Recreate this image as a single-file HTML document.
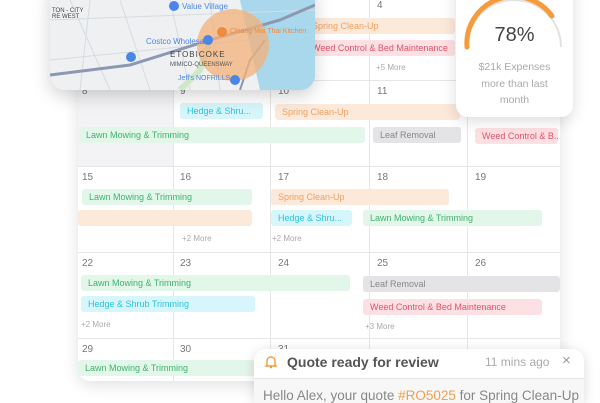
<!DOCTYPE html>
<html><head><meta charset="utf-8"><style>
*{margin:0;padding:0;box-sizing:border-box}
html,body{width:600px;height:403px;overflow:hidden}
body{background:#fff;font-family:"Liberation Sans",sans-serif;position:relative}
.a{position:absolute}
.cal{left:78px;top:-10px;width:482px;height:391px;background:#fff;border-radius:12px;box-shadow:0 4px 16px rgba(0,0,0,.12);overflow:hidden}
.vl{position:absolute;top:0;width:1px;background:#e6e6e8}
.hl{position:absolute;left:0;width:100%;height:1px;background:#e6e6e8}
.d{position:absolute;font-size:10px;color:#777}
.ev{position:absolute;height:16px;border-radius:3px;font-size:9px;line-height:16px;padding-left:7px;white-space:nowrap;overflow:hidden}
.g{background:#e3f6ea;color:#3fb36e}.p{background:#fde9da;color:#f0a060}.c{background:#d6f6fb;color:#2ec3dd}.r{background:#fde0e3;color:#e0546a}.gr{background:#e4e4e6;color:#888}
.m{position:absolute;font-size:8px;color:#aaa}
</style></head><body>
<div class="a cal">
 <div class="a" style="left:0;top:90px;width:95px;height:86px;background:#f3f3f5"></div>
 <div class="vl" style="left:95px;height:400px;top:90px"></div>
 <div class="vl" style="left:192px;height:400px;top:90px"></div>
 <div class="vl" style="left:291px;height:400px"></div>
 <div class="vl" style="left:389px;height:400px"></div>
 <div class="hl" style="top:90px"></div>
 <div class="hl" style="top:176px"></div>
 <div class="hl" style="top:262px"></div>
 <div class="hl" style="top:348px"></div>
</div>
<div class="d" style="left:377px;top:0px">4</div>
<div class="ev p" style="left:250px;top:18px;width:205px;padding-left:62px">Spring Clean-Up</div>
<div class="ev r" style="left:250px;top:40px;width:205px;padding-left:62px">Weed Control &amp; Bed Maintenance</div>
<div class="m" style="left:376px;top:63px">+5 More</div>
<div class="d" style="left:82px;top:86px">8</div><div class="d" style="left:180px;top:86px">9</div><div class="d" style="left:278px;top:86px">10</div><div class="d" style="left:377px;top:86px">11</div>
<div class="ev c" style="left:180px;top:103px;width:83px">Hedge &amp; Shru...</div>
<div class="ev p" style="left:275px;top:104px;width:185px">Spring Clean-Up</div>
<div class="ev g" style="left:79px;top:127px;width:286px">Lawn Mowing &amp; Trimming</div>
<div class="ev gr" style="left:373px;top:127px;width:88px">Leaf Removal</div>
<div class="ev r" style="left:475px;top:128px;width:83px">Weed Control &amp; B...</div>
<div class="d" style="left:82px;top:172px">15</div><div class="d" style="left:180px;top:172px">16</div><div class="d" style="left:278px;top:172px">17</div><div class="d" style="left:377px;top:172px">18</div><div class="d" style="left:475px;top:172px">19</div>
<div class="ev g" style="left:82px;top:189px;width:170px">Lawn Mowing &amp; Trimming</div>
<div class="ev p" style="left:78px;top:210px;width:174px"></div>
<div class="ev p" style="left:271px;top:189px;width:178px">Spring Clean-Up</div>
<div class="ev c" style="left:271px;top:210px;width:81px">Hedge &amp; Shru...</div>
<div class="ev g" style="left:363px;top:210px;width:179px">Lawn Mowing &amp; Trimming</div>
<div class="m" style="left:182px;top:234px">+2 More</div><div class="m" style="left:272px;top:234px">+2 More</div>
<div class="d" style="left:82px;top:258px">22</div><div class="d" style="left:180px;top:258px">23</div><div class="d" style="left:278px;top:258px">24</div><div class="d" style="left:377px;top:258px">25</div><div class="d" style="left:475px;top:258px">26</div>
<div class="ev g" style="left:81px;top:275px;width:269px">Lawn Mowing &amp; Trimming</div>
<div class="ev c" style="left:81px;top:296px;width:174px">Hedge &amp; Shrub Trimming</div>
<div class="m" style="left:81px;top:320px">+2 More</div>
<div class="ev gr" style="left:363px;top:276px;width:197px">Leaf Removal</div>
<div class="ev r" style="left:363px;top:299px;width:179px">Weed Control &amp; Bed Maintenance</div>
<div class="m" style="left:365px;top:322px">+3 More</div>
<div class="d" style="left:82px;top:344px">29</div><div class="d" style="left:180px;top:344px">30</div><div class="d" style="left:278px;top:344px">31</div>
<div class="ev g" style="left:78px;top:360px;width:177px">Lawn Mowing &amp; Trimming</div>

<div class="a" style="left:50px;top:-20px;width:265px;height:110px;border-radius:15px;overflow:hidden;box-shadow:0 6px 18px rgba(0,0,0,.18);background:#eef0f2">
<svg width="265" height="110" style="position:absolute;left:0;top:0">
 <path d="M210 110 L230 60 L240 20 L265 0 L265 110Z" fill="#a9d8ec"/>
 <path d="M190 20 L265 20 L265 110 L210 110Z" fill="#a9d8ec"/>
 <g stroke="#d7dbe0" stroke-width="1" fill="none"><path d="M0 40 L265 30"/><path d="M20 20 L60 110"/><path d="M70 20 L100 110"/><path d="M120 20 L140 110"/><path d="M0 80 L200 60"/><path d="M40 20 L30 110"/><path d="M160 20 L170 110"/></g>
 <path d="M0 95 L80 85 L160 60 L230 40 L265 25" stroke="#8c97b3" stroke-width="3" fill="none"/>
 <path d="M190 110 L200 80 L215 60" stroke="#8c97b3" stroke-width="2" fill="none"/>
 <path d="M130 110 L150 90 L160 60" stroke="#cfe8c8" stroke-width="6" fill="none"/>
 <circle cx="183" cy="65" r="36" fill="#f3b27a" fill-opacity=".75"/>
 <circle cx="124" cy="26" r="5" fill="#4a86e8"/><circle cx="158" cy="60" r="5" fill="#4a86e8"/><circle cx="81" cy="77" r="5" fill="#4a86e8"/><circle cx="185" cy="100" r="5" fill="#4a86e8"/><circle cx="172" cy="52" r="5" fill="#f08a3c"/>
</svg>
<div class="a" style="left:132px;top:22px;font-size:8px;color:#4a86e8">Value Village</div>
<div class="a" style="left:96px;top:57px;font-size:8px;color:#4a86e8">Costco Wholesale</div>
<div class="a" style="left:120px;top:70px;font-size:8px;color:#444;letter-spacing:1px">ETOBICOKE</div>
<div class="a" style="left:120px;top:82px;font-size:6px;color:#555">MIMICO-QUEENSWAY</div>
<div class="a" style="left:128px;top:95px;font-size:7px;color:#4a86e8">Jeff's NOFRILLS</div>
<div class="a" style="left:180px;top:48px;font-size:7px;color:#f08a3c">Chiang Mai Thai Kitchen</div>
<div class="a" style="left:2px;top:28px;font-size:6px;color:#444">TON - CITY<br>RE WEST</div>
</div>

<div class="a" style="left:456px;top:-20px;width:117px;height:137px;border-radius:12px;background:#fff;box-shadow:0 4px 16px rgba(0,0,0,.14)">
<svg width="117" height="80" style="position:absolute;left:0;top:0">
 <path d="M11 67 A47 47 0 0 1 105 67" stroke="#e2e2e2" stroke-width="2" fill="none"/>
 <path d="M11 67 A47 47 0 0 1 96 36" stroke="#f79a3a" stroke-width="5" fill="none" stroke-linecap="round"/>
</svg>
<div class="a" style="left:0;top:44px;width:117px;text-align:center;font-size:20px;color:#444">78%</div>
<div class="a" style="left:0;top:79px;width:117px;text-align:center;font-size:10.5px;line-height:16.5px;color:#aaa">$21k Expenses<br>more than last<br>month</div>
</div>

<div class="a" style="left:254px;top:349px;width:330px;height:54px;border-radius:12px 12px 0 0;background:#f7f7f7;box-shadow:0 2px 12px rgba(0,0,0,.15);overflow:hidden">
 <div style="height:30px;background:#fff;border-bottom:1px solid #e6e6e6;position:relative">
  <svg width="14" height="14" style="position:absolute;left:10px;top:6px" viewBox="0 0 14 14"><path d="M3 10 V6 A4 4 0 0 1 11 6 V10 L12 11 H2Z M6 12.5 H8" stroke="#f79a3a" stroke-width="1.4" fill="none"/></svg>
  <div class="a" style="left:33px;top:5px;font-size:14px;font-weight:bold;color:#555">Quote ready for review</div>
  <div class="a" style="left:231px;top:6px;font-size:12px;color:#aaa">11 mins ago</div>
  <div class="a" style="left:308px;top:3px;font-size:15px;color:#999">×</div>
 </div>
 <div class="a" style="left:9px;top:40px;height:14px;overflow:hidden;font-size:13.5px;line-height:14px;color:#888;white-space:nowrap">Hello Alex, your quote <span style="color:#f0a050">#RO5025</span> for Spring Clean-Up</div>
</div>
</body></html>
